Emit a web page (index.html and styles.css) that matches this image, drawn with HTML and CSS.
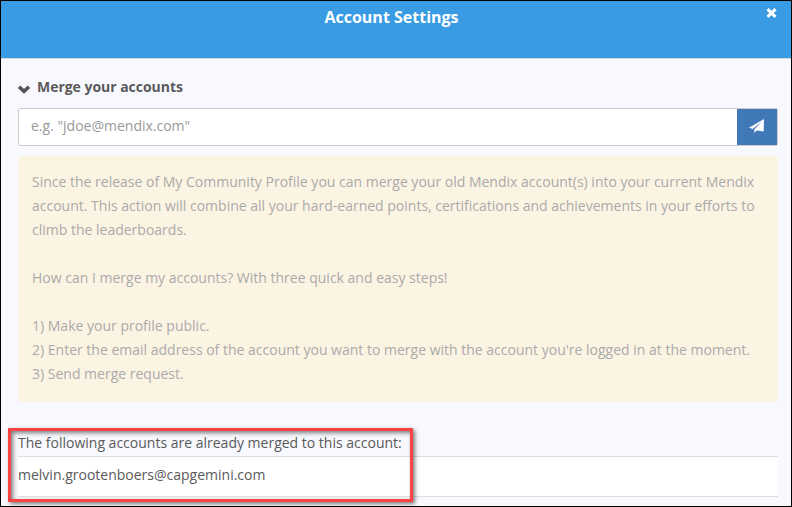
FILE: index.html
```html
<!DOCTYPE html>
<html lang="en">
<head>
<meta charset="utf-8">
<title>Account Settings</title>
<link rel="stylesheet" href="styles.css">
</head>
<body>
<div class="dialog">
  <header class="dialog-header">
    <h1 class="dialog-title">Account Settings</h1>
    <button class="close" aria-label="Close">
      <svg width="11" height="10" viewBox="0 0 11 10"><path d="M1.500 1.200l8 7.600M9.500 1.200l-8 7.600" stroke="#fff" stroke-width="3" fill="none"/></svg>
    </button>
  </header>
  <main class="dialog-body">
    <h2 class="section-title">
      <svg class="chevron" width="12" height="9" viewBox="0 0 12 9"><path d="M1 1.700l5 4.600 5-4.600" fill="none" stroke="#555" stroke-width="3.500"/></svg>
      <span>Merge your accounts</span>
    </h2>
    <div class="merge-form">
      <input class="email" type="text" placeholder="e.g. &quot;jdoe@mendix.com&quot;">
      <button class="send" aria-label="Send">
        <svg width="15" height="14" viewBox="0 0 15 14"><path d="M15 0L0 8.800l3.700 1.300L12.800 2.400 5.300 10.600V14l2.300-2.500 7.100 1z" fill="#fff"/></svg>
      </button>
    </div>
    <div class="notice">
      <p>Since the release of My Community Profile you can merge your old Mendix account(s) into your current Mendix<br>account. This action will combine all your hard-earned points, certifications and achievements in your efforts to<br>climb the leaderboards.</p>
      <p>How can I merge my accounts? With three quick and easy steps!</p>
      <p>1) Make your profile public.<br>2) Enter the email address of the account you want to merge with the account you're logged in at the moment.<br>3) Send merge request.</p>
    </div>
    <section class="merged">
      <div class="merged-label">The following accounts are already merged to this account:</div>
      <div class="merged-item">melvin.grootenboers@capgemini.com</div>
      <div class="highlight"></div>
    </section>
  </main>
</div>
</body>
</html>
```
FILE: styles.css
```css
* {
  box-sizing: border-box;
}

body {
  margin: 0;
  font: 14px/24px "Open Sans", sans-serif;
  color: #5a5a5a;
}

h1, h2, p {
  margin: 0;
}

button {
  border: 0;
  padding: 0;
  display: flex;
  align-items: center;
  justify-content: center;
}

.dialog {
  width: 792px;
  height: 507px;
  border: 1px solid #000;
  background: #f8f9fe;
  overflow: hidden;
}

.dialog-header {
  display: grid;
  grid-template-columns: 31px 1fr 40px;
  align-items: start;
  height: 58px;
  background: #389be3;
  border-bottom: 1px solid #d5d9df;
}

.dialog-title {
  grid-column: 2;
  padding-top: 4px;
  text-align: center;
  font-size: 16px;
  line-height: 24px;
  font-weight: 700;
  color: #fff;
}

.close {
  width: 40px;
  height: 23px;
  background: none;
}

.dialog-body {
  padding: 16px 13px 0 17px;
}

.section-title {
  display: flex;
  align-items: center;
  gap: 7px;
  height: 24px;
  font-size: 14px;
  font-weight: 700;
  letter-spacing: -0.03px;
}

.chevron {
  margin-top: 4px;
}

.merge-form {
  display: flex;
  height: 38px;
  margin-top: 9px;
  border: 1px solid #ccc;
  border-radius: 2px;
  background: #fff;
}

.email {
  flex: 1;
  min-width: 0;
  border: 0;
  padding: 0 12px 2px;
  background: none;
  font: inherit;
}

.email::placeholder {
  color: #999;
  opacity: 1;
}

.send {
  width: 40px;
  padding: 0 1px 3px 0;
  background: #4179b8;
}

.notice {
  margin-top: 10px;
  padding: 14px 14px 16px;
  border-radius: 4px;
  background: #fcf4e3;
  color: #aaa;
  white-space: nowrap;
}

.notice p + p {
  margin-top: 24px;
}

.merged {
  position: relative;
  margin-top: 29px;
}

.merged-label {
  height: 25px;
}

.merged-item {
  height: 41px;
  padding-top: 6px;
  border-top: 1px solid #ddd;
  border-bottom: 1px solid #ddd;
  background: #fff;
}

/* Callout frame around the merged accounts */
.highlight {
  position: absolute;
  left: -10px;
  top: -3px;
  width: 405px;
  height: 74px;
  border: 3px solid #fb4141;
  box-shadow: 2px 2px 4px rgba(0, 0, 0, 0.5), inset 2px 2px 4px rgba(0, 0, 0, 0.5);
}
```
